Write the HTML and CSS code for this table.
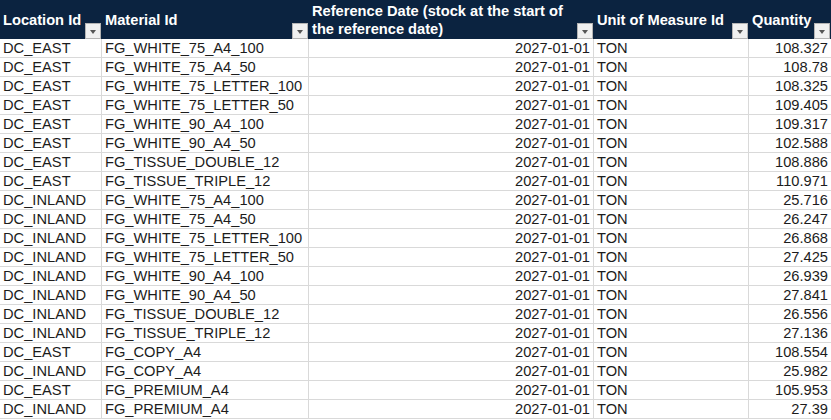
FILE: index.html
```html
<!DOCTYPE html>
<html>
<head>
<meta charset="utf-8">
<link rel="stylesheet" href="styles.css">
</head>
<body>
<div class="sheet">
  <div class="hcell"><span class="htext">Location Id</span><span class="dd"></span></div>
  <div class="hcell"><span class="htext">Material Id</span><span class="dd"></span></div>
  <div class="hcell"><span class="htext wrap">Reference Date (stock at the start of the reference date)</span><span class="dd"></span></div>
  <div class="hcell"><span class="htext">Unit of Measure Id</span><span class="dd"></span></div>
  <div class="hcell last"><span class="htext">Quantity</span><span class="dd"></span></div>

  <div class="c">DC_EAST</div><div class="c">FG_WHITE_75_A4_100</div><div class="c r">2027-01-01</div><div class="c">TON</div><div class="c r last">108.327</div>
  <div class="c">DC_EAST</div><div class="c">FG_WHITE_75_A4_50</div><div class="c r">2027-01-01</div><div class="c">TON</div><div class="c r last">108.78</div>
  <div class="c">DC_EAST</div><div class="c">FG_WHITE_75_LETTER_100</div><div class="c r">2027-01-01</div><div class="c">TON</div><div class="c r last">108.325</div>
  <div class="c">DC_EAST</div><div class="c">FG_WHITE_75_LETTER_50</div><div class="c r">2027-01-01</div><div class="c">TON</div><div class="c r last">109.405</div>
  <div class="c">DC_EAST</div><div class="c">FG_WHITE_90_A4_100</div><div class="c r">2027-01-01</div><div class="c">TON</div><div class="c r last">109.317</div>
  <div class="c">DC_EAST</div><div class="c">FG_WHITE_90_A4_50</div><div class="c r">2027-01-01</div><div class="c">TON</div><div class="c r last">102.588</div>
  <div class="c">DC_EAST</div><div class="c">FG_TISSUE_DOUBLE_12</div><div class="c r">2027-01-01</div><div class="c">TON</div><div class="c r last">108.886</div>
  <div class="c">DC_EAST</div><div class="c">FG_TISSUE_TRIPLE_12</div><div class="c r">2027-01-01</div><div class="c">TON</div><div class="c r last">110.971</div>
  <div class="c">DC_INLAND</div><div class="c">FG_WHITE_75_A4_100</div><div class="c r">2027-01-01</div><div class="c">TON</div><div class="c r last">25.716</div>
  <div class="c">DC_INLAND</div><div class="c">FG_WHITE_75_A4_50</div><div class="c r">2027-01-01</div><div class="c">TON</div><div class="c r last">26.247</div>
  <div class="c">DC_INLAND</div><div class="c">FG_WHITE_75_LETTER_100</div><div class="c r">2027-01-01</div><div class="c">TON</div><div class="c r last">26.868</div>
  <div class="c">DC_INLAND</div><div class="c">FG_WHITE_75_LETTER_50</div><div class="c r">2027-01-01</div><div class="c">TON</div><div class="c r last">27.425</div>
  <div class="c">DC_INLAND</div><div class="c">FG_WHITE_90_A4_100</div><div class="c r">2027-01-01</div><div class="c">TON</div><div class="c r last">26.939</div>
  <div class="c">DC_INLAND</div><div class="c">FG_WHITE_90_A4_50</div><div class="c r">2027-01-01</div><div class="c">TON</div><div class="c r last">27.841</div>
  <div class="c">DC_INLAND</div><div class="c">FG_TISSUE_DOUBLE_12</div><div class="c r">2027-01-01</div><div class="c">TON</div><div class="c r last">26.556</div>
  <div class="c">DC_INLAND</div><div class="c">FG_TISSUE_TRIPLE_12</div><div class="c r">2027-01-01</div><div class="c">TON</div><div class="c r last">27.136</div>
  <div class="c">DC_EAST</div><div class="c">FG_COPY_A4</div><div class="c r">2027-01-01</div><div class="c">TON</div><div class="c r last">108.554</div>
  <div class="c">DC_INLAND</div><div class="c">FG_COPY_A4</div><div class="c r">2027-01-01</div><div class="c">TON</div><div class="c r last">25.982</div>
  <div class="c">DC_EAST</div><div class="c">FG_PREMIUM_A4</div><div class="c r">2027-01-01</div><div class="c">TON</div><div class="c r last">105.953</div>
  <div class="c">DC_INLAND</div><div class="c">FG_PREMIUM_A4</div><div class="c r">2027-01-01</div><div class="c">TON</div><div class="c r last">27.39</div>
</div>
</body>
</html>
```

FILE: styles.css
```css
html, body {
  margin: 0;
  padding: 0;
  background: #ffffff;
}

.sheet {
  display: grid;
  grid-template-columns: 102px 207px 285px 155px 82px;
  grid-auto-rows: 19px;
  grid-template-rows: 39px;
  font-family: "Liberation Sans", Arial, sans-serif;
  font-size: 14.67px;
  width: 831px;
}

.hcell {
  position: relative;
  background: #0b2340;
  color: #ffffff;
  font-weight: bold;
  display: flex;
  align-items: center;
  padding: 0 3px 0 3px;
  box-sizing: border-box;
  line-height: 18px;
}

.htext {
  display: block;
}

.htext.wrap {
  max-width: 268px;
}

.dd {
  position: absolute;
  right: 1px;
  bottom: 0;
  width: 16px;
  height: 16px;
  box-sizing: border-box;
  background: #f0f0f0;
  border: 1px solid #b4b4b4;
}

.dd::after {
  content: "";
  position: absolute;
  left: 4px;
  top: 6px;
  width: 0;
  height: 0;
  border-left: 3.5px solid transparent;
  border-right: 3.5px solid transparent;
  border-top: 4px solid #555555;
}

.c {
  box-sizing: border-box;
  border-right: 1px solid #d9d9d9;
  border-bottom: 1px solid #d9d9d9;
  padding: 0 3px;
  color: #1c1c1c;
  line-height: 19px;
  white-space: nowrap;
  overflow: hidden;
}

.c.r {
  text-align: right;
}

.c.last {
  border-right: none;
}
```
